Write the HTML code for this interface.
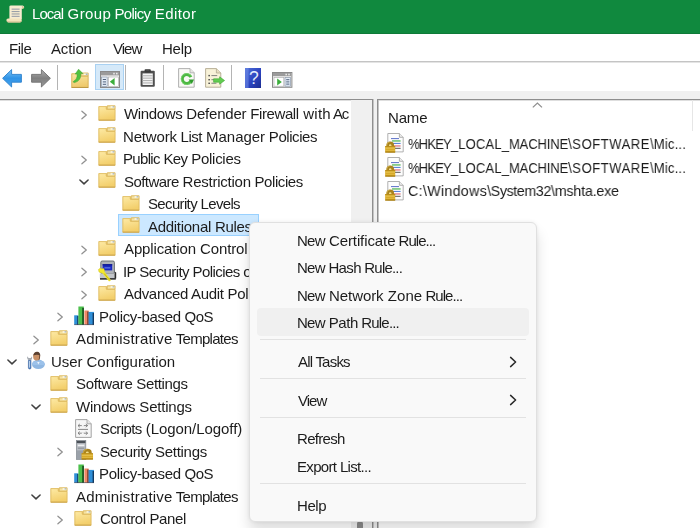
<!DOCTYPE html>
<html><head><meta charset="utf-8"><title>Local Group Policy Editor</title>
<style>
html,body{margin:0;padding:0;}
body{width:700px;height:528px;overflow:hidden;position:relative;background:#fff;font-family:"Liberation Sans", sans-serif;font-size:15px;color:#1a1a1a;}
.abs{position:absolute;}
#title{left:0;top:0;width:700px;height:33px;background:#10893e;border-bottom:1px solid #0f7a38;}
#menubar{left:0;top:34px;width:700px;height:27px;background:#fff;border-bottom:1px solid #c4c4c4;box-shadow:0 1px 0 #e4e4e4;}
#toolbar{left:0;top:63px;width:700px;height:28px;background:#fff;}
#gap{left:0;top:91px;width:700px;height:437px;background:#f0f0f0;}
#tree{left:0;top:99px;width:372px;height:429px;background:#fff;border-top:1px solid #8e8e8e;border-right:1px solid #8e8e8e;box-shadow:1px 0 0 #c4c4c4, inset 0 1px 0 #dedede;}
#vs{left:351px;top:100.4px;width:21px;height:428px;background:#f0f0f0;}
#thumb{left:357px;top:521px;width:6px;height:10px;background:#8a8a8a;border-radius:3px 3px 0 0;}
#list{left:377px;top:99px;width:323px;height:429px;background:#fff;border-top:1px solid #8e8e8e;border-left:1px solid #8e8e8e;box-sizing:border-box;box-shadow:inset 1px 0 0 #c4c4c4, inset 0 1px 0 #dedede;}
.tx{position:absolute;white-space:pre;line-height:22px;height:22px;will-change:transform;}
svg{position:absolute;overflow:visible;}
#menu{left:249.4px;top:222.3px;width:287.2px;height:299.6px;background:#f9f9f9;border-radius:6px;box-sizing:border-box;border:1px solid #e0e0e0;box-shadow:0 10px 14px rgba(0,0,0,0.13),0 0 4px rgba(0,0,0,0.08);}
.sep{position:absolute;left:259.5px;width:266px;height:1px;background:#e2e2e2;}
#hl{left:256.6px;top:308.3px;width:272.6px;height:27.3px;background:#f0f0f0;border-radius:4px;}
</style></head><body>
<div id="title" class="abs"></div>
<svg style="left:6px;top:5px" width="19" height="18" viewBox="0 0 19 18"><path d="M3.4 1.4 Q3.4 0.4 5 0.4 H16.6 Q18.6 0.6 18.2 2.6 Q17.8 3.8 15.8 3.6 V14 H3.4 Z" fill="#f7ecd0"/><path d="M15.8 3.6 Q16.8 2.6 15.6 1.2 Q17.8 0.8 18 2.4 Q17.8 3.8 15.8 3.6Z" fill="#d9c79a"/><path d="M0.4 15.2 Q0.2 13.6 2.2 13.4 H14.6 Q16 13.6 15.8 15.4 Q15.6 17.2 13.8 17.4 H2 Q0.6 17.2 0.4 15.2Z" fill="#f3e4bd"/><path d="M0.6 15.6 Q1 17.4 2.6 17.4 H13.8 Q15.6 17.2 15.8 15.4 L14 16.4 H2.4Z" fill="#cdb88a"/><g fill="#9aa0a8"><rect x="5.6" y="3.6" width="8" height="1.1"/><rect x="5.6" y="6" width="8" height="1.1"/><rect x="5.6" y="8.4" width="8" height="1.1"/><rect x="5.6" y="10.8" width="8" height="1.1"/></g></svg>
<span class="tx" style="left:32.40px;top:3.20px;font-size:15px;color:#ffffff;"><span style="letter-spacing:-0.962px">Local</span><span style="letter-spacing:0.369px"> Group</span><span style="letter-spacing:-0.725px"> Policy</span><span style="letter-spacing:0.400px"> Editor</span></span>
<div id="menubar" class="abs"></div>
<span class="tx" style="left:8.60px;top:37.60px;font-size:15px;color:#1c1c1c;"><span style="letter-spacing:-0.477px">File</span></span><span class="tx" style="left:51.40px;top:37.60px;font-size:15px;color:#1c1c1c;"><span style="letter-spacing:-0.152px">Action</span></span><span class="tx" style="left:112.90px;top:37.60px;font-size:15px;color:#1c1c1c;"><span style="letter-spacing:-0.972px">View</span></span><span class="tx" style="left:162.20px;top:37.60px;font-size:15px;color:#1c1c1c;"><span style="letter-spacing:-0.239px">Help</span></span>
<div id="toolbar" class="abs"></div>
<div id="gap" class="abs"></div>
<div id="tree" class="abs"></div>
<div id="list" class="abs"></div>
<svg style="left:2px;top:69px" width="20" height="19" viewBox="0 0 20 19"><defs><linearGradient id="gb" x1="0" y1="0" x2="0" y2="1"><stop offset="0" stop-color="#7cc4f6"/><stop offset="0.5" stop-color="#2f93e6"/><stop offset="1" stop-color="#4aa6ee"/></linearGradient></defs><path d="M0.6 9.3 L9.6 0.6 V5.4 H19.4 V13.2 H9.6 V18 Z" fill="url(#gb)" stroke="#2a7fcc" stroke-width="0.9" stroke-linejoin="round"/></svg>
<svg style="left:31px;top:69px" width="20" height="19" viewBox="0 0 20 19"><defs><linearGradient id="gf" x1="0" y1="0" x2="0" y2="1"><stop offset="0" stop-color="#b0b0b0"/><stop offset="0.5" stop-color="#7f7f7f"/><stop offset="1" stop-color="#9a9a9a"/></linearGradient></defs><path d="M19.4 9.3 L10.4 0.6 V5.4 H0.6 V13.2 H10.4 V18 Z" fill="url(#gf)" stroke="#6e6e6e" stroke-width="0.9" stroke-linejoin="round"/></svg>
<div class="abs" style="left:57px;top:65px;width:1px;height:25px;background:#b4b4b4"></div>
<svg style="left:70.8px;top:69px" width="18" height="19" viewBox="0 0 18 19"><defs><linearGradient id="gu" x1="0" y1="0" x2="0.2" y2="1"><stop offset="0" stop-color="#f9e6a4"/><stop offset="1" stop-color="#efca6c"/></linearGradient></defs><path d="M0.5 4.4 H9.4 L10.4 3.8 H17.4 V18.6 H0.5 Z" fill="#e3bf62"/><path d="M10 4.1 H17.1 V7 H10 Z" fill="#f4e2a4" stroke="#cfab55" stroke-width="0.6"/><rect x="12.8" y="4.6" width="3.8" height="1.3" fill="#fbfbf3"/><rect x="14.8" y="4.6" width="1.8" height="1.2" fill="#98a6b8"/><path d="M0.8 4.8 H9 V6.6 Q9 7.2 9.6 7.2 H17.1 V18.3 H0.8 Z" fill="url(#gu)" stroke="#d4ae56" stroke-width="0.7"/><path d="M0.5 18.5 H17.4" stroke="#b99440" stroke-width="0.9"/><path d="M2.2 12.6 Q6.4 10.6 6.2 5 H4.2 L7.6 0.2 L11.9 4.6 H9.8 Q10.2 12 3.6 13.6 Q2.2 13.6 2.2 12.6 Z" fill="#4fc23f" stroke="#3aa02e" stroke-width="0.5" stroke-linejoin="round"/></svg>
<div class="abs" style="left:95px;top:64.2px;width:28.6px;height:26.2px;background:#d5e9f9;border:1px solid #a9d1f2;box-sizing:border-box"></div>
<svg style="left:100px;top:71px" width="20" height="17" viewBox="0 0 20 17"><rect x="0.5" y="0.5" width="19" height="16" fill="#f2f2f2" stroke="#8a8a8a" stroke-width="1"/><rect x="1" y="1" width="18" height="3.4" fill="#9b9b9b"/><rect x="13.2" y="1.8" width="1.6" height="1.6" fill="#e8e8e8"/><rect x="16" y="1.8" width="1.6" height="1.6" fill="#e8e8e8"/><rect x="1.6" y="6" width="5.6" height="9.6" fill="#e4edf7" stroke="#8a97a8" stroke-width="0.7"/><rect x="2.8" y="8" width="3.2" height="1" fill="#50627c"/><rect x="2.8" y="10.4" width="3.2" height="1" fill="#50627c"/><rect x="2.8" y="12.8" width="3.2" height="1" fill="#50627c"/><rect x="8.6" y="6" width="9.8" height="9.6" fill="#ffffff" stroke="#a8a8a8" stroke-width="0.6"/><path d="M14.6 7 V14.6 L9.8 10.8 Z" fill="#3cae3c"/></svg>
<div class="abs" style="left:125px;top:65px;width:1px;height:25px;background:#b4b4b4"></div>
<svg style="left:139.8px;top:68.6px" width="15.4" height="18" viewBox="0 0 15.4 18"><rect x="0.6" y="1.8" width="14.2" height="16" rx="1" fill="#4f4f4f"/><rect x="4.6" y="0.2" width="6.2" height="3.2" rx="0.8" fill="#3a3a3a"/><rect x="6.2" y="0" width="3" height="1.4" fill="#666"/><rect x="2.6" y="4.4" width="10.2" height="11.6" fill="#f4f4f4"/><g fill="#b4b4b4"><rect x="2.6" y="6.2" width="10.2" height="1.1"/><rect x="2.6" y="8.6" width="10.2" height="1.1"/><rect x="2.6" y="11" width="10.2" height="1.1"/><rect x="2.6" y="13.4" width="10.2" height="1.1"/></g></svg>
<div class="abs" style="left:163px;top:65px;width:1px;height:25px;background:#b4b4b4"></div>
<svg style="left:178.2px;top:67.8px" width="17" height="20" viewBox="0 0 17 20"><path d="M0.6 0.6 H12 L16.2 4.8 V19.2 H0.6 Z" fill="#f9f9f6" stroke="#a8a8a8" stroke-width="0.9"/><path d="M12 0.6 V4.8 H16.2" fill="#e6e6e2" stroke="#a8a8a8" stroke-width="0.8"/><path d="M12.9 9.2 A4.5 4.5 0 1 0 12.6 13.4" fill="none" stroke="#4cb842" stroke-width="3"/><path d="M13.6 8.2 A5.6 5.6 0 1 0 13.4 14.2" fill="none" stroke="#92de86" stroke-width="0.7" opacity="0.8"/><path d="M10.6 11.4 H16 L13.8 16 Z" fill="#2f9a2c"/></svg>
<svg style="left:204.8px;top:67.8px" width="20" height="20" viewBox="0 0 20 20"><path d="M0.6 0.6 H11.4 L15.8 5 V19.2 H0.6 Z" fill="#f8f2d8" stroke="#b0a890" stroke-width="0.9"/><path d="M11.4 0.6 V5 H15.8" fill="#e8dfc0" stroke="#b0a890" stroke-width="0.8"/><g fill="#4a4a4a"><rect x="3.4" y="6.9" width="1.5" height="1.4"/><rect x="3.4" y="11" width="1.5" height="1.4"/><rect x="3.4" y="14.6" width="1.5" height="1.4"/></g><g fill="#8c8c84"><rect x="6.4" y="7" width="5.8" height="1.1"/><rect x="6.4" y="11.1" width="3" height="1.1"/><rect x="6.4" y="14.7" width="5" height="1.1"/></g><path d="M8.6 10.8 H14.6 V8.8 L19.6 12.5 L14.6 16.2 V14.2 H8.6 Z" fill="#62cc50" stroke="#3fa834" stroke-width="0.6" stroke-linejoin="round"/></svg>
<div class="abs" style="left:231.4px;top:65px;width:1px;height:25px;background:#b4b4b4"></div>
<svg style="left:245px;top:67.7px" width="16" height="20" viewBox="0 0 16 20"><defs><linearGradient id="gh" x1="0" y1="0" x2="1" y2="1"><stop offset="0" stop-color="#4f6fd8"/><stop offset="0.55" stop-color="#2c44c0"/><stop offset="1" stop-color="#1b2c90"/></linearGradient></defs><rect x="0" y="0" width="16" height="20" fill="url(#gh)"/><rect x="0" y="0" width="3.6" height="20" fill="#6f8ce6" opacity="0.55"/><text x="8.8" y="16.2" font-family="Liberation Sans, sans-serif" font-size="17.5" fill="#e4ecfb" text-anchor="middle">?</text></svg>
<svg style="left:271.8px;top:71.7px" width="20.4" height="15.8" viewBox="0 0 20.4 15.8"><rect x="0.5" y="0.5" width="19.4" height="14.8" fill="#f2f2f2" stroke="#8a8a8a" stroke-width="1"/><rect x="1" y="1" width="18.4" height="3.2" fill="#9b9b9b"/><rect x="13.4" y="1.7" width="1.6" height="1.6" fill="#e8e8e8"/><rect x="16.2" y="1.7" width="1.6" height="1.6" fill="#e8e8e8"/><rect x="2" y="5.6" width="9.8" height="8.6" fill="#ffffff" stroke="#a8a8a8" stroke-width="0.6"/><path d="M5.2 6.6 V13.4 L9.8 10 Z" fill="#3cae3c"/><rect x="13" y="5.6" width="5.6" height="8.6" fill="#e4edf7" stroke="#8a97a8" stroke-width="0.7"/><rect x="14.2" y="7.2" width="3.2" height="1" fill="#50627c"/><rect x="14.2" y="9.4" width="3.2" height="1" fill="#50627c"/><rect x="14.2" y="11.6" width="3.2" height="1" fill="#50627c"/></svg>
<svg style="left:80px;top:108.6px" width="8" height="12" viewBox="0 0 8 12"><path d="M1.9 2.2 L6.3 6 L1.9 9.8" fill="none" stroke="#909090" stroke-width="1.25" stroke-linecap="round" stroke-linejoin="round"/></svg>
<svg style="left:97.8px;top:104.9px" width="18" height="16" viewBox="0 0 18 16"><defs><linearGradient id="fg1" x1="0" y1="0" x2="0.3" y2="1"><stop offset="0" stop-color="#fdeaa5"/><stop offset="1" stop-color="#f3cf6c"/></linearGradient></defs><path d="M0.6 1.2 H8.6 L9.6 0.5 H17.3 V15.4 H0.6 Z" fill="#e9c66a"/><path d="M9.2 0.9 H17 V4.2 H9.2 Z" fill="#f6e3a2" stroke="#d6b158" stroke-width="0.7"/><path d="M12.6 1.3 H16.3 V2.6 H12.6 Z" fill="#fdfdf6"/><path d="M14.6 1.3 H16.3 V2.4 H14.6 Z" fill="#9aa7b8"/><path d="M0.9 1.6 H8.2 V3.9 Q8.2 4.4 8.8 4.4 H17 V15 H0.9 Z" fill="url(#fg1)" stroke="#dcb75c" stroke-width="0.7"/><path d="M0.7 15.2 H17.2" stroke="#c9a24a" stroke-width="0.9"/></svg>
<span class="tx" style="left:124.40px;top:103.00px;font-size:15px;color:#1c1c1c;"><span style="letter-spacing:-0.363px">Windows</span><span style="letter-spacing:-0.200px"> Defender</span><span style="letter-spacing:-0.389px"> Firewall</span><span style="letter-spacing:0.280px"> with</span><span style="letter-spacing:-1.337px"> Ac</span></span>
<svg style="left:97.8px;top:127.4px" width="18" height="16" viewBox="0 0 18 16"><defs><linearGradient id="fg2" x1="0" y1="0" x2="0.3" y2="1"><stop offset="0" stop-color="#fdeaa5"/><stop offset="1" stop-color="#f3cf6c"/></linearGradient></defs><path d="M0.6 1.2 H8.6 L9.6 0.5 H17.3 V15.4 H0.6 Z" fill="#e9c66a"/><path d="M9.2 0.9 H17 V4.2 H9.2 Z" fill="#f6e3a2" stroke="#d6b158" stroke-width="0.7"/><path d="M12.6 1.3 H16.3 V2.6 H12.6 Z" fill="#fdfdf6"/><path d="M14.6 1.3 H16.3 V2.4 H14.6 Z" fill="#9aa7b8"/><path d="M0.9 1.6 H8.2 V3.9 Q8.2 4.4 8.8 4.4 H17 V15 H0.9 Z" fill="url(#fg2)" stroke="#dcb75c" stroke-width="0.7"/><path d="M0.7 15.2 H17.2" stroke="#c9a24a" stroke-width="0.9"/></svg>
<span class="tx" style="left:123.40px;top:125.50px;font-size:15px;color:#1c1c1c;"><span style="letter-spacing:-0.156px">Network</span><span style="letter-spacing:-0.504px"> List</span><span style="letter-spacing:-0.026px"> Manager</span><span style="letter-spacing:-0.440px"> Policies</span></span>
<svg style="left:80px;top:153.6px" width="8" height="12" viewBox="0 0 8 12"><path d="M1.9 2.2 L6.3 6 L1.9 9.8" fill="none" stroke="#909090" stroke-width="1.25" stroke-linecap="round" stroke-linejoin="round"/></svg>
<svg style="left:97.8px;top:149.9px" width="18" height="16" viewBox="0 0 18 16"><defs><linearGradient id="fg3" x1="0" y1="0" x2="0.3" y2="1"><stop offset="0" stop-color="#fdeaa5"/><stop offset="1" stop-color="#f3cf6c"/></linearGradient></defs><path d="M0.6 1.2 H8.6 L9.6 0.5 H17.3 V15.4 H0.6 Z" fill="#e9c66a"/><path d="M9.2 0.9 H17 V4.2 H9.2 Z" fill="#f6e3a2" stroke="#d6b158" stroke-width="0.7"/><path d="M12.6 1.3 H16.3 V2.6 H12.6 Z" fill="#fdfdf6"/><path d="M14.6 1.3 H16.3 V2.4 H14.6 Z" fill="#9aa7b8"/><path d="M0.9 1.6 H8.2 V3.9 Q8.2 4.4 8.8 4.4 H17 V15 H0.9 Z" fill="url(#fg3)" stroke="#dcb75c" stroke-width="0.7"/><path d="M0.7 15.2 H17.2" stroke="#c9a24a" stroke-width="0.9"/></svg>
<span class="tx" style="left:123.40px;top:148.00px;font-size:15px;color:#1c1c1c;"><span style="letter-spacing:-0.665px">Public</span><span style="letter-spacing:-0.624px"> Key</span><span style="letter-spacing:-0.288px"> Policies</span></span>
<svg style="left:78.3px;top:177.7px" width="12" height="8" viewBox="0 0 12 8"><path d="M1.9 2 L6 5.9 L10.1 2" fill="none" stroke="#404040" stroke-width="1.5" stroke-linecap="round" stroke-linejoin="round"/></svg>
<svg style="left:97.8px;top:172.4px" width="18" height="16" viewBox="0 0 18 16"><defs><linearGradient id="fg4" x1="0" y1="0" x2="0.3" y2="1"><stop offset="0" stop-color="#fdeaa5"/><stop offset="1" stop-color="#f3cf6c"/></linearGradient></defs><path d="M0.6 1.2 H8.6 L9.6 0.5 H17.3 V15.4 H0.6 Z" fill="#e9c66a"/><path d="M9.2 0.9 H17 V4.2 H9.2 Z" fill="#f6e3a2" stroke="#d6b158" stroke-width="0.7"/><path d="M12.6 1.3 H16.3 V2.6 H12.6 Z" fill="#fdfdf6"/><path d="M14.6 1.3 H16.3 V2.4 H14.6 Z" fill="#9aa7b8"/><path d="M0.9 1.6 H8.2 V3.9 Q8.2 4.4 8.8 4.4 H17 V15 H0.9 Z" fill="url(#fg4)" stroke="#dcb75c" stroke-width="0.7"/><path d="M0.7 15.2 H17.2" stroke="#c9a24a" stroke-width="0.9"/></svg>
<span class="tx" style="left:124.40px;top:170.50px;font-size:15px;color:#1c1c1c;"><span style="letter-spacing:-0.568px">Software</span><span style="letter-spacing:-0.239px"> Restriction</span><span style="letter-spacing:-0.433px"> Policies</span></span>
<svg style="left:121.8px;top:194.9px" width="18" height="16" viewBox="0 0 18 16"><defs><linearGradient id="fg5" x1="0" y1="0" x2="0.3" y2="1"><stop offset="0" stop-color="#fdeaa5"/><stop offset="1" stop-color="#f3cf6c"/></linearGradient></defs><path d="M0.6 1.2 H8.6 L9.6 0.5 H17.3 V15.4 H0.6 Z" fill="#e9c66a"/><path d="M9.2 0.9 H17 V4.2 H9.2 Z" fill="#f6e3a2" stroke="#d6b158" stroke-width="0.7"/><path d="M12.6 1.3 H16.3 V2.6 H12.6 Z" fill="#fdfdf6"/><path d="M14.6 1.3 H16.3 V2.4 H14.6 Z" fill="#9aa7b8"/><path d="M0.9 1.6 H8.2 V3.9 Q8.2 4.4 8.8 4.4 H17 V15 H0.9 Z" fill="url(#fg5)" stroke="#dcb75c" stroke-width="0.7"/><path d="M0.7 15.2 H17.2" stroke="#c9a24a" stroke-width="0.9"/></svg>
<span class="tx" style="left:148.40px;top:193.00px;font-size:15px;color:#1c1c1c;"><span style="letter-spacing:-0.651px">Security Levels</span></span>
<div class="abs" style="left:118px;top:214px;width:139px;height:20.4px;background:#cce8ff;border:1px solid #99d1ff;box-sizing:content-box"></div>
<svg style="left:121.8px;top:217.4px" width="18" height="16" viewBox="0 0 18 16"><defs><linearGradient id="fg6" x1="0" y1="0" x2="0.3" y2="1"><stop offset="0" stop-color="#fdeaa5"/><stop offset="1" stop-color="#f3cf6c"/></linearGradient></defs><path d="M0.6 1.2 H8.6 L9.6 0.5 H17.3 V15.4 H0.6 Z" fill="#e9c66a"/><path d="M9.2 0.9 H17 V4.2 H9.2 Z" fill="#f6e3a2" stroke="#d6b158" stroke-width="0.7"/><path d="M12.6 1.3 H16.3 V2.6 H12.6 Z" fill="#fdfdf6"/><path d="M14.6 1.3 H16.3 V2.4 H14.6 Z" fill="#9aa7b8"/><path d="M0.9 1.6 H8.2 V3.9 Q8.2 4.4 8.8 4.4 H17 V15 H0.9 Z" fill="url(#fg6)" stroke="#dcb75c" stroke-width="0.7"/><path d="M0.7 15.2 H17.2" stroke="#c9a24a" stroke-width="0.9"/></svg>
<span class="tx" style="left:148.40px;top:215.50px;font-size:15px;color:#1c1c1c;"><span style="letter-spacing:-0.287px">Additional Rules</span></span>
<svg style="left:80px;top:243.6px" width="8" height="12" viewBox="0 0 8 12"><path d="M1.9 2.2 L6.3 6 L1.9 9.8" fill="none" stroke="#909090" stroke-width="1.25" stroke-linecap="round" stroke-linejoin="round"/></svg>
<svg style="left:97.8px;top:239.9px" width="18" height="16" viewBox="0 0 18 16"><defs><linearGradient id="fg7" x1="0" y1="0" x2="0.3" y2="1"><stop offset="0" stop-color="#fdeaa5"/><stop offset="1" stop-color="#f3cf6c"/></linearGradient></defs><path d="M0.6 1.2 H8.6 L9.6 0.5 H17.3 V15.4 H0.6 Z" fill="#e9c66a"/><path d="M9.2 0.9 H17 V4.2 H9.2 Z" fill="#f6e3a2" stroke="#d6b158" stroke-width="0.7"/><path d="M12.6 1.3 H16.3 V2.6 H12.6 Z" fill="#fdfdf6"/><path d="M14.6 1.3 H16.3 V2.4 H14.6 Z" fill="#9aa7b8"/><path d="M0.9 1.6 H8.2 V3.9 Q8.2 4.4 8.8 4.4 H17 V15 H0.9 Z" fill="url(#fg7)" stroke="#dcb75c" stroke-width="0.7"/><path d="M0.7 15.2 H17.2" stroke="#c9a24a" stroke-width="0.9"/></svg>
<span class="tx" style="left:124.40px;top:238.00px;font-size:15px;color:#1c1c1c;"><span style="letter-spacing:-0.126px">Application Control</span><span style="letter-spacing:-0.126px"> Policies</span></span>
<svg style="left:80px;top:266.1px" width="8" height="12" viewBox="0 0 8 12"><path d="M1.9 2.2 L6.3 6 L1.9 9.8" fill="none" stroke="#909090" stroke-width="1.25" stroke-linecap="round" stroke-linejoin="round"/></svg>
<svg style="left:97.6px;top:259.7px" width="19" height="21" viewBox="0 0 19 21"><rect x="2.8" y="1" width="13.6" height="12.6" rx="1.4" fill="#aeb2b7" stroke="#62666b" stroke-width="0.9"/><rect x="4.6" y="4.2" width="9.6" height="6.2" fill="#1a28c0"/><rect x="4.6" y="4.2" width="9.6" height="1.2" fill="#10188a"/><rect x="6.4" y="7.4" width="6" height="1" fill="#6f8ff0"/><path d="M1.8 13.4 H17.8 V18.2 Q17.8 19.2 16.8 19.2 H2.8 Q1.8 19.2 1.8 18.2 Z" fill="#c3c6ca"/><path d="M2 18.2 H17.8 V19.6 H2 Z" fill="#1c1c1c"/><path d="M16.6 11.4 V18.6 H18.2 V12.6 Z" fill="#2c2c2c"/><path d="M0.4 9.6 L2.4 8 L4 9 L5.6 8.2 L6.6 10.4 L5.8 12.4 L3 13 L1 12 Z" fill="#f3e72c" stroke="#c4b818" stroke-width="0.4"/><path d="M4.6 11.4 L11.4 20" stroke="#f3e72c" stroke-width="2.5" stroke-linecap="round"/><path d="M6.2 13.6 L11.8 20.4" stroke="#9a9410" stroke-width="0.6"/></svg>
<span class="tx" style="left:123.40px;top:260.50px;font-size:15px;color:#1c1c1c;"><span style="letter-spacing:-0.569px">IP Security Policies</span><span style="letter-spacing:-0.569px"> on Local Computer</span></span>
<svg style="left:80px;top:288.6px" width="8" height="12" viewBox="0 0 8 12"><path d="M1.9 2.2 L6.3 6 L1.9 9.8" fill="none" stroke="#909090" stroke-width="1.25" stroke-linecap="round" stroke-linejoin="round"/></svg>
<svg style="left:97.8px;top:284.9px" width="18" height="16" viewBox="0 0 18 16"><defs><linearGradient id="fg8" x1="0" y1="0" x2="0.3" y2="1"><stop offset="0" stop-color="#fdeaa5"/><stop offset="1" stop-color="#f3cf6c"/></linearGradient></defs><path d="M0.6 1.2 H8.6 L9.6 0.5 H17.3 V15.4 H0.6 Z" fill="#e9c66a"/><path d="M9.2 0.9 H17 V4.2 H9.2 Z" fill="#f6e3a2" stroke="#d6b158" stroke-width="0.7"/><path d="M12.6 1.3 H16.3 V2.6 H12.6 Z" fill="#fdfdf6"/><path d="M14.6 1.3 H16.3 V2.4 H14.6 Z" fill="#9aa7b8"/><path d="M0.9 1.6 H8.2 V3.9 Q8.2 4.4 8.8 4.4 H17 V15 H0.9 Z" fill="url(#fg8)" stroke="#dcb75c" stroke-width="0.7"/><path d="M0.7 15.2 H17.2" stroke="#c9a24a" stroke-width="0.9"/></svg>
<span class="tx" style="left:124.40px;top:283.00px;font-size:15px;color:#1c1c1c;letter-spacing:-0.327px;">Advanced Audit Policy Configuration</span>
<svg style="left:56px;top:311.1px" width="8" height="12" viewBox="0 0 8 12"><path d="M1.9 2.2 L6.3 6 L1.9 9.8" fill="none" stroke="#909090" stroke-width="1.25" stroke-linecap="round" stroke-linejoin="round"/></svg>
<svg style="left:73px;top:306.3px" width="21" height="19" viewBox="0 0 21 19"><rect x="1.2" y="9.3" width="4.2" height="9.4" fill="#2f8fd8"/><rect x="4.2" y="10" width="1.2" height="8.7" fill="#123a63"/><rect x="5.4" y="0.5" width="5.4" height="18.2" fill="#4cc04c"/><rect x="9.3" y="1.8" width="1.5" height="16.9" fill="#14401a"/><rect x="11.4" y="4.5" width="4.2" height="14.2" fill="#f08a68"/><rect x="14.4" y="5.5" width="1.2" height="13.2" fill="#5a2418"/><rect x="15.6" y="5.9" width="5.4" height="12.8" fill="#2f8fd8"/><rect x="19.6" y="7" width="1.4" height="11.7" fill="#123a63"/><rect x="1.2" y="18.2" width="19.8" height="0.9" fill="#223" opacity="0.6"/></svg>
<span class="tx" style="left:99.40px;top:305.50px;font-size:15px;color:#1c1c1c;"><span style="letter-spacing:-0.343px">Policy-based</span><span style="letter-spacing:-0.444px"> QoS</span></span>
<svg style="left:32px;top:333.6px" width="8" height="12" viewBox="0 0 8 12"><path d="M1.9 2.2 L6.3 6 L1.9 9.8" fill="none" stroke="#909090" stroke-width="1.25" stroke-linecap="round" stroke-linejoin="round"/></svg>
<svg style="left:49.8px;top:329.9px" width="18" height="16" viewBox="0 0 18 16"><defs><linearGradient id="fg9" x1="0" y1="0" x2="0.3" y2="1"><stop offset="0" stop-color="#fdeaa5"/><stop offset="1" stop-color="#f3cf6c"/></linearGradient></defs><path d="M0.6 1.2 H8.6 L9.6 0.5 H17.3 V15.4 H0.6 Z" fill="#e9c66a"/><path d="M9.2 0.9 H17 V4.2 H9.2 Z" fill="#f6e3a2" stroke="#d6b158" stroke-width="0.7"/><path d="M12.6 1.3 H16.3 V2.6 H12.6 Z" fill="#fdfdf6"/><path d="M14.6 1.3 H16.3 V2.4 H14.6 Z" fill="#9aa7b8"/><path d="M0.9 1.6 H8.2 V3.9 Q8.2 4.4 8.8 4.4 H17 V15 H0.9 Z" fill="url(#fg9)" stroke="#dcb75c" stroke-width="0.7"/><path d="M0.7 15.2 H17.2" stroke="#c9a24a" stroke-width="0.9"/></svg>
<span class="tx" style="left:76.40px;top:328.00px;font-size:15px;color:#1c1c1c;"><span style="letter-spacing:0.166px">Administrative</span><span style="letter-spacing:-0.704px"> Templates</span></span>
<svg style="left:6.3px;top:357.7px" width="12" height="8" viewBox="0 0 12 8"><path d="M1.9 2 L6 5.9 L10.1 2" fill="none" stroke="#404040" stroke-width="1.5" stroke-linecap="round" stroke-linejoin="round"/></svg>
<svg style="left:26.4px;top:350.7px" width="20" height="19" viewBox="0 0 20 19"><ellipse cx="12.4" cy="13.4" rx="6.4" ry="4.6" fill="#8fb7e2"/><path d="M6 14 Q6 9.5 12.4 9.2 Q19 9.5 18.8 14 Z" fill="#9cc2ea"/><path d="M11.2 11 L12.4 13.6 L13.6 11 Z" fill="#eef4fb"/><ellipse cx="10.6" cy="5.6" rx="3.5" ry="4" fill="#c89066"/><path d="M7.2 4.6 Q8 0.6 11.2 0.8 Q14.4 1 14.3 5.2 Q12 2.8 7.2 4.6 Z" fill="#5a4030"/><path d="M13 3.4 Q14.6 5 13.6 8.6 L12.4 9.4 Q13.4 6.4 13 3.4Z" fill="#6a4a36"/><rect x="2.4" y="8.6" width="2.6" height="9.4" rx="1.2" fill="#4c7fc0" stroke="#2d5590" stroke-width="0.5"/><rect x="3.2" y="10" width="0.9" height="6.6" fill="#cfe0f4"/><path d="M1.2 5.2 Q0.8 8.6 3 9.2 H4.6 Q6.6 8.4 6 5.2 L4.8 7 H2.6 Z" fill="#a4a9b0"/></svg>
<span class="tx" style="left:51.40px;top:350.50px;font-size:15px;color:#1c1c1c;"><span style="letter-spacing:-0.054px">User Configuration</span></span>
<svg style="left:49.8px;top:374.9px" width="18" height="16" viewBox="0 0 18 16"><defs><linearGradient id="fg10" x1="0" y1="0" x2="0.3" y2="1"><stop offset="0" stop-color="#fdeaa5"/><stop offset="1" stop-color="#f3cf6c"/></linearGradient></defs><path d="M0.6 1.2 H8.6 L9.6 0.5 H17.3 V15.4 H0.6 Z" fill="#e9c66a"/><path d="M9.2 0.9 H17 V4.2 H9.2 Z" fill="#f6e3a2" stroke="#d6b158" stroke-width="0.7"/><path d="M12.6 1.3 H16.3 V2.6 H12.6 Z" fill="#fdfdf6"/><path d="M14.6 1.3 H16.3 V2.4 H14.6 Z" fill="#9aa7b8"/><path d="M0.9 1.6 H8.2 V3.9 Q8.2 4.4 8.8 4.4 H17 V15 H0.9 Z" fill="url(#fg10)" stroke="#dcb75c" stroke-width="0.7"/><path d="M0.7 15.2 H17.2" stroke="#c9a24a" stroke-width="0.9"/></svg>
<span class="tx" style="left:76.40px;top:373.00px;font-size:15px;color:#1c1c1c;"><span style="letter-spacing:-0.341px">Software Settings</span></span>
<svg style="left:30.3px;top:402.7px" width="12" height="8" viewBox="0 0 12 8"><path d="M1.9 2 L6 5.9 L10.1 2" fill="none" stroke="#404040" stroke-width="1.5" stroke-linecap="round" stroke-linejoin="round"/></svg>
<svg style="left:49.8px;top:397.4px" width="18" height="16" viewBox="0 0 18 16"><defs><linearGradient id="fg11" x1="0" y1="0" x2="0.3" y2="1"><stop offset="0" stop-color="#fdeaa5"/><stop offset="1" stop-color="#f3cf6c"/></linearGradient></defs><path d="M0.6 1.2 H8.6 L9.6 0.5 H17.3 V15.4 H0.6 Z" fill="#e9c66a"/><path d="M9.2 0.9 H17 V4.2 H9.2 Z" fill="#f6e3a2" stroke="#d6b158" stroke-width="0.7"/><path d="M12.6 1.3 H16.3 V2.6 H12.6 Z" fill="#fdfdf6"/><path d="M14.6 1.3 H16.3 V2.4 H14.6 Z" fill="#9aa7b8"/><path d="M0.9 1.6 H8.2 V3.9 Q8.2 4.4 8.8 4.4 H17 V15 H0.9 Z" fill="url(#fg11)" stroke="#dcb75c" stroke-width="0.7"/><path d="M0.7 15.2 H17.2" stroke="#c9a24a" stroke-width="0.9"/></svg>
<span class="tx" style="left:76.40px;top:395.50px;font-size:15px;color:#1c1c1c;"><span style="letter-spacing:-0.208px">Windows Settings</span></span>
<svg style="left:74.8px;top:418.6px" width="17" height="19" viewBox="0 0 17 19"><path d="M0.6 0.6 H12 L16.2 4.8 V18.4 H0.6 Z" fill="#f6f6f6" stroke="#9a9a9a" stroke-width="0.9"/><path d="M12 0.6 V4.8 H16.2" fill="#e6e6e6" stroke="#9a9a9a" stroke-width="0.8"/><g stroke="#7c7c7c" stroke-width="0.9" fill="none"><path d="M3 6.6 H12.6 M4.8 5 L3 6.6 L4.8 8.2 M10.8 5 L12.6 6.6 L10.8 8.2" stroke-dasharray="none"/><path d="M3 10.4 H13"/><path d="M3 14.2 H12.6 M4.8 12.6 L3 14.2 L4.8 15.8 M10.8 12.6 L12.6 14.2 L10.8 15.8"/></g><rect x="6.8" y="5.8" width="2" height="1.6" fill="#f6f6f6"/><rect x="6.8" y="13.4" width="2" height="1.6" fill="#f6f6f6"/></svg>
<span class="tx" style="left:100.40px;top:418.00px;font-size:15px;color:#1c1c1c;"><span style="letter-spacing:-0.607px">Scripts</span><span style="letter-spacing:-0.054px"> (Logon/Logoff)</span></span>
<svg style="left:56px;top:446.1px" width="8" height="12" viewBox="0 0 8 12"><path d="M1.9 2.2 L6.3 6 L1.9 9.8" fill="none" stroke="#909090" stroke-width="1.25" stroke-linecap="round" stroke-linejoin="round"/></svg>
<svg style="left:76px;top:440.2px" width="18" height="20" viewBox="0 0 18 20"><rect x="0.4" y="0.6" width="9.4" height="18.8" fill="#b8bcc2" stroke="#7f858c" stroke-width="0.7"/><rect x="0.8" y="0.9" width="8.6" height="2.2" fill="#4b5158"/><rect x="1.8" y="4.6" width="6.6" height="1.6" fill="#eef0f2"/><rect x="1.8" y="7.6" width="6.6" height="1.2" fill="#8e949b"/><rect x="0.8" y="10.4" width="8.6" height="8.6" fill="#9aa1a9"/><g transform="translate(5.6 8.5) scale(1.12 0.95)"><path d="M2.5 6 V4.1 Q2.5 1.7 5.1 1.7 Q7.7 1.7 7.7 4.1 V6" fill="#f1de8c" stroke="#a8821e" stroke-width="2.7"/><path d="M1.6 5.4 V4 Q1.7 1.2 4.6 0.8" fill="none" stroke="#d9bb58" stroke-width="0.7"/><rect x="0" y="5" width="10.2" height="6.6" rx="0.7" fill="#d2a21e"/><rect x="0" y="5" width="10.2" height="1.1" fill="#b98c18"/><rect x="0.2" y="6.5" width="9.8" height="1" fill="#efd064"/><rect x="0.2" y="8.7" width="9.8" height="0.9" fill="#e9c552"/><rect x="0" y="10.6" width="10.2" height="1" fill="#a27a14"/></g></svg>
<span class="tx" style="left:100.40px;top:440.50px;font-size:15px;color:#1c1c1c;"><span style="letter-spacing:-0.385px">Security</span><span style="letter-spacing:-0.280px"> Settings</span></span>
<svg style="left:73px;top:463.8px" width="21" height="19" viewBox="0 0 21 19"><rect x="1.2" y="9.3" width="4.2" height="9.4" fill="#2f8fd8"/><rect x="4.2" y="10" width="1.2" height="8.7" fill="#123a63"/><rect x="5.4" y="0.5" width="5.4" height="18.2" fill="#4cc04c"/><rect x="9.3" y="1.8" width="1.5" height="16.9" fill="#14401a"/><rect x="11.4" y="4.5" width="4.2" height="14.2" fill="#f08a68"/><rect x="14.4" y="5.5" width="1.2" height="13.2" fill="#5a2418"/><rect x="15.6" y="5.9" width="5.4" height="12.8" fill="#2f8fd8"/><rect x="19.6" y="7" width="1.4" height="11.7" fill="#123a63"/><rect x="1.2" y="18.2" width="19.8" height="0.9" fill="#223" opacity="0.6"/></svg>
<span class="tx" style="left:99.40px;top:463.00px;font-size:15px;color:#1c1c1c;"><span style="letter-spacing:-0.343px">Policy-based</span><span style="letter-spacing:-0.444px"> QoS</span></span>
<svg style="left:30.3px;top:492.7px" width="12" height="8" viewBox="0 0 12 8"><path d="M1.9 2 L6 5.9 L10.1 2" fill="none" stroke="#404040" stroke-width="1.5" stroke-linecap="round" stroke-linejoin="round"/></svg>
<svg style="left:49.8px;top:487.4px" width="18" height="16" viewBox="0 0 18 16"><defs><linearGradient id="fg12" x1="0" y1="0" x2="0.3" y2="1"><stop offset="0" stop-color="#fdeaa5"/><stop offset="1" stop-color="#f3cf6c"/></linearGradient></defs><path d="M0.6 1.2 H8.6 L9.6 0.5 H17.3 V15.4 H0.6 Z" fill="#e9c66a"/><path d="M9.2 0.9 H17 V4.2 H9.2 Z" fill="#f6e3a2" stroke="#d6b158" stroke-width="0.7"/><path d="M12.6 1.3 H16.3 V2.6 H12.6 Z" fill="#fdfdf6"/><path d="M14.6 1.3 H16.3 V2.4 H14.6 Z" fill="#9aa7b8"/><path d="M0.9 1.6 H8.2 V3.9 Q8.2 4.4 8.8 4.4 H17 V15 H0.9 Z" fill="url(#fg12)" stroke="#dcb75c" stroke-width="0.7"/><path d="M0.7 15.2 H17.2" stroke="#c9a24a" stroke-width="0.9"/></svg>
<span class="tx" style="left:76.40px;top:485.50px;font-size:15px;color:#1c1c1c;"><span style="letter-spacing:0.166px">Administrative</span><span style="letter-spacing:-0.704px"> Templates</span></span>
<svg style="left:56px;top:513.6px" width="8" height="12" viewBox="0 0 8 12"><path d="M1.9 2.2 L6.3 6 L1.9 9.8" fill="none" stroke="#909090" stroke-width="1.25" stroke-linecap="round" stroke-linejoin="round"/></svg>
<svg style="left:73.8px;top:509.9px" width="18" height="16" viewBox="0 0 18 16"><defs><linearGradient id="fg13" x1="0" y1="0" x2="0.3" y2="1"><stop offset="0" stop-color="#fdeaa5"/><stop offset="1" stop-color="#f3cf6c"/></linearGradient></defs><path d="M0.6 1.2 H8.6 L9.6 0.5 H17.3 V15.4 H0.6 Z" fill="#e9c66a"/><path d="M9.2 0.9 H17 V4.2 H9.2 Z" fill="#f6e3a2" stroke="#d6b158" stroke-width="0.7"/><path d="M12.6 1.3 H16.3 V2.6 H12.6 Z" fill="#fdfdf6"/><path d="M14.6 1.3 H16.3 V2.4 H14.6 Z" fill="#9aa7b8"/><path d="M0.9 1.6 H8.2 V3.9 Q8.2 4.4 8.8 4.4 H17 V15 H0.9 Z" fill="url(#fg13)" stroke="#dcb75c" stroke-width="0.7"/><path d="M0.7 15.2 H17.2" stroke="#c9a24a" stroke-width="0.9"/></svg>
<span class="tx" style="left:100.40px;top:508.00px;font-size:15px;color:#1c1c1c;"><span style="letter-spacing:-0.380px">Control Panel</span></span>
<div id="vs" class="abs"></div>
<div id="thumb" class="abs"></div>
<span class="tx" style="left:387.80px;top:106.50px;font-size:15px;color:#1c1c1c;"><span style="letter-spacing:-0.158px">Name</span></span>
<div class="abs" style="left:692px;top:100px;width:1px;height:31px;background:#e6e6e6"></div>
<svg style="left:532px;top:101.8px" width="11" height="6" viewBox="0 0 11 6"><path d="M0.8 5.4 L5.4 1 L10 5.4" fill="none" stroke="#8e8e8e" stroke-width="1.25"/></svg>
<svg style="left:384.8px;top:133.2px" width="19" height="20" viewBox="0 0 19 20"><path d="M2.8 0.5 H14.4 L18.2 4.3 V18.9 H2.8 Z" fill="#fdfdfd" stroke="#a8a8a8" stroke-width="0.9"/><path d="M14.4 0.5 V4.3 H18.2" fill="#ececec" stroke="#a0a0a0" stroke-width="0.8"/><rect x="6" y="5.1" width="8" height="1" fill="#5a6fc8"/><rect x="7" y="7.2" width="8.6" height="1.5" fill="#6cc070"/><rect x="8" y="9.9" width="7.6" height="1" fill="#4a7ad8"/><rect x="9" y="12.3" width="6.6" height="1.3" fill="#e07a80"/><rect x="10" y="14.8" width="5.6" height="1" fill="#555"/><g transform="translate(0.2 8.2) scale(0.98 0.98)"><path d="M2.5 6 V4.1 Q2.5 1.7 5.1 1.7 Q7.7 1.7 7.7 4.1 V6" fill="#f1de8c" stroke="#a8821e" stroke-width="2.7"/><path d="M1.6 5.4 V4 Q1.7 1.2 4.6 0.8" fill="none" stroke="#d9bb58" stroke-width="0.7"/><rect x="0" y="5" width="10.2" height="6.6" rx="0.7" fill="#d2a21e"/><rect x="0" y="5" width="10.2" height="1.1" fill="#b98c18"/><rect x="0.2" y="6.5" width="9.8" height="1" fill="#efd064"/><rect x="0.2" y="8.7" width="9.8" height="0.9" fill="#e9c552"/><rect x="0" y="10.6" width="10.2" height="1" fill="#a27a14"/></g></svg>
<span class="tx" style="left:408.20px;top:132.90px;font-size:15px;color:#1c1c1c;transform:scaleX(0.87);transform-origin:0 50%;"><span style="letter-spacing:-1.006px">%HKEY</span><span style="letter-spacing:0.181px">_LOCAL</span><span style="letter-spacing:-0.155px">_MACHINE</span><span style="letter-spacing:0.605px">\SOFTWARE</span><span style="letter-spacing:0.203px">\Mic...</span></span>
<svg style="left:384.8px;top:156.8px" width="19" height="20" viewBox="0 0 19 20"><path d="M2.8 0.5 H14.4 L18.2 4.3 V18.9 H2.8 Z" fill="#fdfdfd" stroke="#a8a8a8" stroke-width="0.9"/><path d="M14.4 0.5 V4.3 H18.2" fill="#ececec" stroke="#a0a0a0" stroke-width="0.8"/><rect x="6" y="5.1" width="8" height="1" fill="#5a6fc8"/><rect x="7" y="7.2" width="8.6" height="1.5" fill="#6cc070"/><rect x="8" y="9.9" width="7.6" height="1" fill="#4a7ad8"/><rect x="9" y="12.3" width="6.6" height="1.3" fill="#e07a80"/><rect x="10" y="14.8" width="5.6" height="1" fill="#555"/><g transform="translate(0.2 8.2) scale(0.98 0.98)"><path d="M2.5 6 V4.1 Q2.5 1.7 5.1 1.7 Q7.7 1.7 7.7 4.1 V6" fill="#f1de8c" stroke="#a8821e" stroke-width="2.7"/><path d="M1.6 5.4 V4 Q1.7 1.2 4.6 0.8" fill="none" stroke="#d9bb58" stroke-width="0.7"/><rect x="0" y="5" width="10.2" height="6.6" rx="0.7" fill="#d2a21e"/><rect x="0" y="5" width="10.2" height="1.1" fill="#b98c18"/><rect x="0.2" y="6.5" width="9.8" height="1" fill="#efd064"/><rect x="0.2" y="8.7" width="9.8" height="0.9" fill="#e9c552"/><rect x="0" y="10.6" width="10.2" height="1" fill="#a27a14"/></g></svg>
<span class="tx" style="left:408.20px;top:156.50px;font-size:15px;color:#1c1c1c;transform:scaleX(0.87);transform-origin:0 50%;"><span style="letter-spacing:-1.006px">%HKEY</span><span style="letter-spacing:0.181px">_LOCAL</span><span style="letter-spacing:-0.155px">_MACHINE</span><span style="letter-spacing:0.605px">\SOFTWARE</span><span style="letter-spacing:0.203px">\Mic...</span></span>
<svg style="left:384.8px;top:180.5px" width="19" height="20" viewBox="0 0 19 20"><path d="M2.8 0.5 H14.4 L18.2 4.3 V18.9 H2.8 Z" fill="#fdfdfd" stroke="#a8a8a8" stroke-width="0.9"/><path d="M14.4 0.5 V4.3 H18.2" fill="#ececec" stroke="#a0a0a0" stroke-width="0.8"/><rect x="6" y="5.1" width="8" height="1" fill="#5a6fc8"/><rect x="7" y="7.2" width="8.6" height="1.5" fill="#6cc070"/><rect x="8" y="9.9" width="7.6" height="1" fill="#4a7ad8"/><rect x="9" y="12.3" width="6.6" height="1.3" fill="#e07a80"/><rect x="10" y="14.8" width="5.6" height="1" fill="#555"/><g transform="translate(0.2 8.2) scale(0.98 0.98)"><path d="M2.5 6 V4.1 Q2.5 1.7 5.1 1.7 Q7.7 1.7 7.7 4.1 V6" fill="#f1de8c" stroke="#a8821e" stroke-width="2.7"/><path d="M1.6 5.4 V4 Q1.7 1.2 4.6 0.8" fill="none" stroke="#d9bb58" stroke-width="0.7"/><rect x="0" y="5" width="10.2" height="6.6" rx="0.7" fill="#d2a21e"/><rect x="0" y="5" width="10.2" height="1.1" fill="#b98c18"/><rect x="0.2" y="6.5" width="9.8" height="1" fill="#efd064"/><rect x="0.2" y="8.7" width="9.8" height="0.9" fill="#e9c552"/><rect x="0" y="10.6" width="10.2" height="1" fill="#a27a14"/></g></svg>
<span class="tx" style="left:408.10px;top:180.20px;font-size:15px;color:#1c1c1c;transform:scaleX(0.95);transform-origin:0 50%;"><span style="letter-spacing:0.326px">C:\Windows</span><span style="letter-spacing:-0.413px">\System32</span><span style="letter-spacing:-0.178px">\mshta.exe</span></span>
<div id="menu" class="abs"></div>
<div id="hl" class="abs"></div>
<div class="sep" style="top:338.9px"></div>
<div class="sep" style="top:378.1px"></div>
<div class="sep" style="top:416.6px"></div>
<div class="sep" style="top:482.7px"></div>
<span class="tx" style="left:296.80px;top:229.90px;font-size:15px;color:#1c1c1c;"><span style="letter-spacing:-0.713px">New</span><span style="letter-spacing:-0.099px"> Certificate</span><span style="letter-spacing:-0.968px"> Rule...</span></span>
<span class="tx" style="left:296.80px;top:257.40px;font-size:15px;color:#1c1c1c;"><span style="letter-spacing:-0.713px">New</span><span style="letter-spacing:-0.627px"> Hash</span><span style="letter-spacing:-0.799px"> Rule...</span></span>
<span class="tx" style="left:296.80px;top:284.60px;font-size:15px;color:#1c1c1c;"><span style="letter-spacing:-0.713px">New</span><span style="letter-spacing:-0.062px"> Network</span><span style="letter-spacing:0.070px"> Zone</span><span style="letter-spacing:-0.965px"> Rule...</span></span>
<span class="tx" style="left:296.80px;top:311.60px;font-size:15px;color:#1c1c1c;"><span style="letter-spacing:-0.713px">New</span><span style="letter-spacing:-0.392px"> Path</span><span style="letter-spacing:-0.815px"> Rule...</span></span>
<span class="tx" style="left:297.80px;top:350.90px;font-size:15px;color:#1c1c1c;"><span style="letter-spacing:-0.790px">All Tasks</span></span>
<span class="tx" style="left:297.80px;top:390.10px;font-size:15px;color:#1c1c1c;"><span style="letter-spacing:-0.972px">View</span></span>
<span class="tx" style="left:296.80px;top:428.40px;font-size:15px;color:#1c1c1c;"><span style="letter-spacing:-0.681px">Refresh</span></span>
<span class="tx" style="left:296.80px;top:456.20px;font-size:15px;color:#1c1c1c;"><span style="letter-spacing:-0.662px">Export List...</span></span>
<span class="tx" style="left:296.80px;top:494.60px;font-size:15px;color:#1c1c1c;"><span style="letter-spacing:-0.439px">Help</span></span>
<svg style="left:509px;top:355.6px" width="9" height="12" viewBox="0 0 9 12"><path d="M1.6 1.4 L6.6 6 L1.6 10.6" fill="none" stroke="#2a2a2a" stroke-width="1.5" stroke-linecap="round" stroke-linejoin="round"/></svg>
<svg style="left:509px;top:394.2px" width="9" height="12" viewBox="0 0 9 12"><path d="M1.6 1.4 L6.6 6 L1.6 10.6" fill="none" stroke="#2a2a2a" stroke-width="1.5" stroke-linecap="round" stroke-linejoin="round"/></svg>
</body></html>
